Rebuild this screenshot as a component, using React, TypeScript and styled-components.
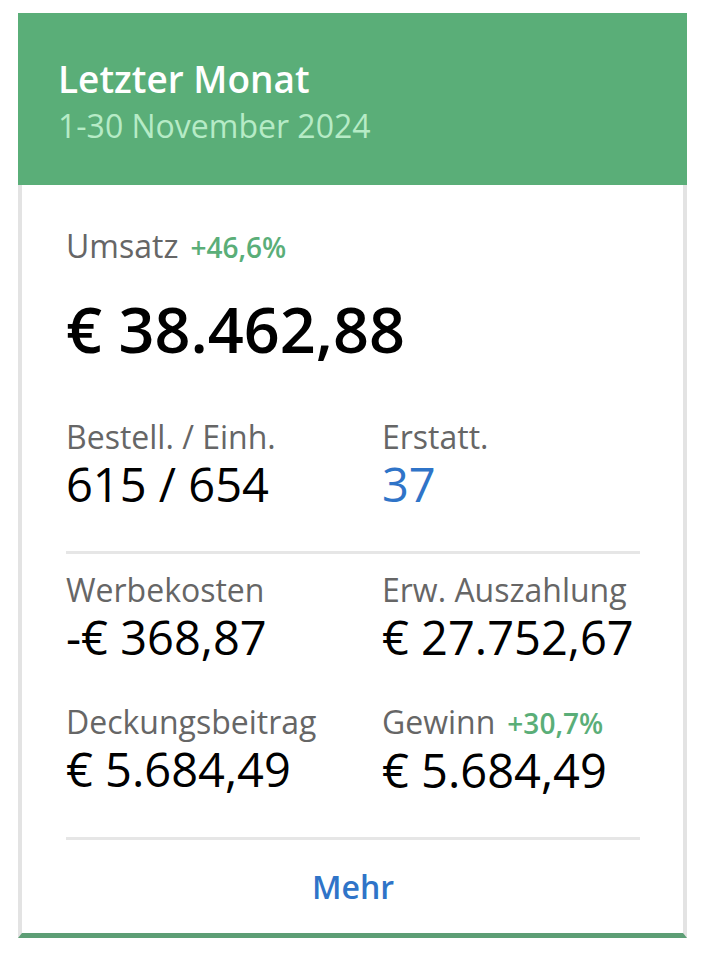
import styled, { createGlobalStyle } from "styled-components";

const GlobalStyle = createGlobalStyle`
  body {
    margin: 0;
    background: #ffffff;
    font-family: "Open Sans", "Noto Sans", sans-serif;
  }
`;

type Cell = { label: string; value: string; change?: string; link?: boolean };

const orders: Cell[] = [
  { label: "Bestell. / Einh.", value: "615 / 654" },
  { label: "Erstatt.", value: "37", link: true },
];

const costs: Cell[][] = [
  [
    { label: "Werbekosten", value: "-€ 368,87" },
    { label: "Erw. Auszahlung", value: "€ 27.752,67" },
  ],
  [
    { label: "Deckungsbeitrag", value: "€ 5.684,49" },
    { label: "Gewinn", value: "€ 5.684,49", change: "+30,7%" },
  ],
];

const Stat = ({ cell }: { cell: Cell }) => (
  <StatBox>
    <Label>
      {cell.label}
      {cell.change && <Change>{cell.change}</Change>}
    </Label>
    <Value $link={cell.link}>{cell.value}</Value>
  </StatBox>
);

const App = () => {
  return (
    <>
      <GlobalStyle />
      <Page>
        <Card>
          <Header>
            <Title>Letzter Monat</Title>
            <Period>1-30 November 2024</Period>
          </Header>
          <Body>
            <Label>
              Umsatz<Change>+46,6%</Change>
            </Label>
            <Total>€ 38.462,88</Total>
            <Row>
              {orders.map((cell) => (
                <Stat key={cell.label} cell={cell} />
              ))}
            </Row>
            <Divider />
            <Costs>
              {costs.map((row, i) => (
                <Row key={i}>
                  {row.map((cell) => (
                    <Stat key={cell.label} cell={cell} />
                  ))}
                </Row>
              ))}
            </Costs>
            <Divider />
            <MoreButton>Mehr</MoreButton>
          </Body>
        </Card>
      </Page>
    </>
  );
};

const Page = styled.div`
  padding: 13px 23px 18px 18px;
`;

const Card = styled.div`
  background: #ffffff;
  border-left: 4px solid #e3e3e3;
  border-right: 4px solid #e3e3e3;
  border-bottom: 5px solid #5d9e75;
`;

const Header = styled.div`
  background: #5aae78;
  margin: 0 -4px;
  padding: 44px 40px 0;
  height: 172px;
  box-sizing: border-box;
`;

const Title = styled.div`
  color: #ffffff;
  font-size: 37px;
  font-weight: 600;
  line-height: 44px;
`;

const Period = styled.div`
  color: #b6ebc6;
  font-size: 32px;
  font-weight: 400;
  line-height: 50px;
`;

const Body = styled.div`
  padding: 41px 43px 0 44px;
`;

const Label = styled.div`
  display: flex;
  align-items: baseline;
  gap: 12px;
  color: #666666;
  font-size: 32px;
  line-height: 40px;
  white-space: nowrap;
`;

const Change = styled.span`
  color: #5aae78;
  font-size: 28px;
  font-weight: 600;
`;

const Total = styled.div`
  color: #000000;
  font-size: 63px;
  font-weight: 600;
  line-height: 80px;
  margin: 22px 0 48px;
`;

const Row = styled.div`
  display: grid;
  grid-template-columns: 316px 1fr;
`;

const Costs = styled.div`
  display: flex;
  flex-direction: column;
  gap: 38px;
  padding-top: 16px;
`;

const StatBox = styled.div`
  display: flex;
  flex-direction: column;
`;

const Value = styled.div<{ $link?: boolean }>`
  color: ${(p) => (p.$link ? "#2f74c8" : "#000000")};
  font-size: 47px;
  line-height: 54px;
  white-space: nowrap;
`;

const Divider = styled.hr`
  margin: 40px 0 0;
  border: none;
  height: 3px;
  background: #e6e6e6;
`;

const MoreButton = styled.button`
  display: block;
  width: 100%;
  border: none;
  background: none;
  padding: 25px 0 24px;
  color: #2f74c8;
  font-family: "Open Sans", sans-serif;
  font-size: 32px;
  font-weight: 600;
  line-height: 44px;
  cursor: pointer;
`;

export default App;
